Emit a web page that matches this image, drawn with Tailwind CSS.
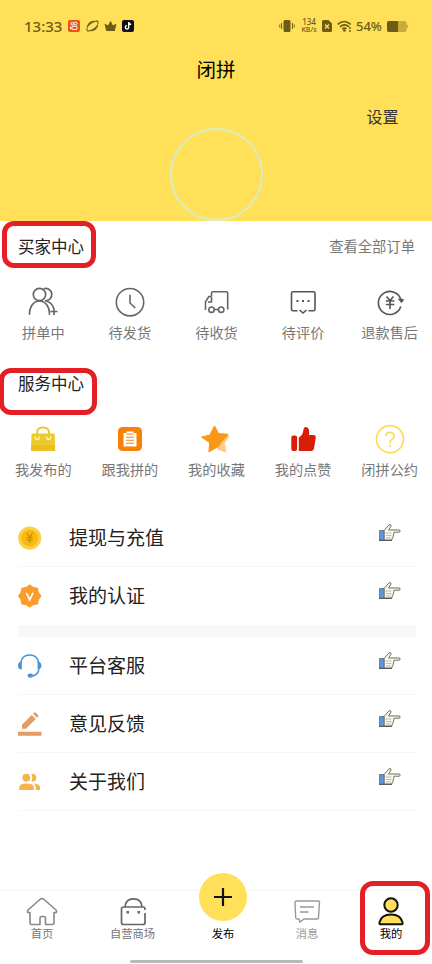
<!DOCTYPE html>
<html lang="zh-CN">
<head>
<meta charset="utf-8">
<title>我的</title>
<script src="https://cdn.jsdelivr.net/npm/@tailwindcss/browser@4"></script>
</head>
<body class="bg-white">
<svg width="0" height="0" class="absolute">
  <defs>
    <symbol id="hand" viewBox="0 0 24 20">
      <path d="M6 7.500 11 2q1.200-1 2 .1.400.7-.4 1.800L10.500 7H21q1.200 0 1.200 1T21 9.200h-5l-.4 2.600-.8 2.800-1.200 2.400H6z" fill="#fcfbee" stroke="#6d6c60" stroke-width="1"/>
      <path d="M7.500 10h6M8 12.500h5.500M8 14.800h5" stroke="#aaa99a" stroke-width=".8"/>
      <path d="M1.500 7.500h4.500v9.700H1.500z" fill="#6296d8" stroke="#52688a" stroke-width=".8"/>
      <path d="M1 17.400h13" stroke="#55554f" stroke-width="1"/>
    </symbol>
  </defs>
</svg>
<div class="relative w-[432px] h-[964px] overflow-hidden flex flex-col bg-white font-['Noto_Sans_CJK_SC',sans-serif] text-[#222]">

  <!-- Header -->
  <header class="h-[221px] shrink-0 bg-[#ffe058] flex flex-col">
    <div class="h-[52px] flex items-center pl-6 pr-[24px] text-[#6c5c14]">
      <span class="w-[44px] text-[15px] leading-[20px] font-medium font-['Noto_Sans',sans-serif] -mt-px">13:33</span>
      <svg class="w-3 h-3" viewBox="0 0 12 12"><rect width="12" height="12" rx="2" fill="#ea5514"/><g fill="none" stroke="#fff" stroke-width="1"><circle cx="4.300" cy="3.700" r="1.300"/><circle cx="7.500" cy="3.600" r="1.500"/><rect x="4" y="6.200" width="5" height="3.300" rx="1"/><path d="M2.500 6.500v2.500l1.500-1"/></g></svg>
      <svg class="w-[13px] h-3 ml-[5.500px]" viewBox="0 0 13 12"><path d="M.8 8.500C.5 3.800 4.500.2 9.500.8L12 1C7.500 1.800 3.500 4 .8 8.500zM12.200 3.500c.3 4.700-3.700 8.300-8.700 7.700L1 11c4.500-.8 8.500-3 11.200-7.500z" fill="currentColor"/><path d="M1 8v2.900l2 .1M12 4V1.100L10 1" fill="none" stroke="currentColor" stroke-width="1"/></svg>
      <svg class="w-[13px] h-3 ml-[5px]" viewBox="0 0 13 12"><path d="M.5 3.500 4 5.500 6.500.8 9 5.500l3.500-2L10.800 11H2.200z" fill="currentColor"/></svg>
      <svg class="w-3 h-3 ml-[5px]" viewBox="0 0 12 12"><rect width="12" height="12" rx="2" fill="#111018"/><path d="M6.700 2v5.300A1.700 1.700 0 1 1 5 5.600M6.700 2.200c.2 1.500 1.200 2.200 2.500 2.300" fill="none" stroke="#fff" stroke-width="1.400"/></svg>
      <span class="grow"></span>
      <svg class="w-4 h-3 mr-[4px]" viewBox="0 0 16 12"><rect x="4.500" y="0" width="7" height="12" rx="1.500" fill="currentColor"/><path d="M2.600 3v6M.8 4.500v3M13.400 3v6M15.200 4.500v3" stroke="currentColor" stroke-width="1"/></svg>
      <span class="w-[20px] mr-[3px] text-[8px] leading-[8px] font-medium font-['Noto_Sans',sans-serif] whitespace-nowrap flex flex-col items-center"><span>134</span><span class="text-[7px]">KB/s</span></span>
      <svg class="w-[10px] h-3 mr-[5px]" viewBox="0 0 10 12"><path d="M1.500 0h5L10 3.500v7a1.500 1.500 0 0 1-1.500 1.500h-7A1.500 1.500 0 0 1 0 10.500v-9A1.500 1.500 0 0 1 1.500 0z" fill="currentColor"/><path d="m3 4.500 4 4m0-4-4 4" stroke="#ffe058" stroke-width="1.300"/></svg>
      <svg class="w-[15px] h-3 mr-[4px]" viewBox="0 0 15 12"><path d="M.7 4.300q6.500-5.600 13 0M3 6.800q4.500-3.700 9 0M5.200 9q2.300-1.800 4.300 0" fill="none" stroke="currentColor" stroke-width="1.600"/><circle cx="7.400" cy="10.500" r="1.300" fill="currentColor"/><path d="M13 7v2m0 1v2" stroke="currentColor" stroke-width="1.400"/></svg>
      <span class="w-[27px] mr-[4px] text-[13px] leading-[16px] font-medium font-['Noto_Sans',sans-serif]">54%</span>
      <svg class="w-[21px] h-[11px]" viewBox="0 0 21 11"><path d="M2 0h16q1.500 0 1.500 2v1.500q1.500 0 1.500 2t-1.500 2V9q0 2-1.500 2H2Q0 11 0 9V2Q0 0 2 0z" fill="#c6aa3c"/><path d="M2 0h9v11H2Q0 11 0 9V2Q0 0 2 0z" fill="currentColor"/></svg>
    </div>
    <h1 class="h-[33px] flex items-center justify-center text-[19.500px] text-black">闭拼</h1>
    <div class="mt-[19px] h-[24px] flex items-center justify-end pr-[33.500px] text-[16px] text-[#333]">设置</div>
    <div class="self-center w-[93px] h-[93px] shrink-0 rounded-full border-[2.500px] border-[#d9ebc4]"></div>
  </header>

  <!-- Buyer centre -->
  <section class="h-[137px] shrink-0 flex flex-col">
    <div class="h-[50px] flex items-center justify-between pl-[18px] pr-[17px]">
      <h2 class="text-[16.500px]">买家中心</h2>
      <a class="text-[14.300px] text-[#777]">查看全部订单</a>
    </div>
    <div class="grid grid-cols-5 w-[433px] pt-[15px] text-[14.200px] leading-[20px] text-[#777] text-center">
      <div class="flex flex-col items-center gap-1">
        <svg class="w-8 h-8" viewBox="0 0 32 32" fill="none" stroke="#666" stroke-width="1.700"><circle cx="12.500" cy="8.500" r="6.200"/><path d="M16.500 2.700a6.200 6.200 0 1 1 1.500 12M2.500 28.800C2.500 20 7 15 12.500 15S22.500 20 22.500 28.800M19 15q6.500 2 7.500 7M23.500 25.500h7M27 22v7"/></svg>
        <span>拼单中</span></div>
      <div class="flex flex-col items-center gap-1">
        <svg class="w-8 h-8" viewBox="0 0 32 32" fill="none" stroke="#666" stroke-width="1.600"><circle cx="16" cy="16.200" r="13.700"/><path d="M16 8.700V17l5.200 5"/></svg>
        <span>待发货</span></div>
      <div class="flex flex-col items-center gap-1">
        <svg class="w-8 h-8" viewBox="0 0 32 32" fill="none" stroke="#666" stroke-width="1.600"><path d="M11.500 10V7q0-1.300 1.300-1.300h13.500q1.400 0 1.400 1.300v16.500M11.500 10.500H8.800L5.500 16v8M11.500 10.500V16H8M14.500 23.500h4"/><circle cx="11.500" cy="23.700" r="2.700"/><circle cx="21.200" cy="23.700" r="2.700"/></svg>
        <span>待收货</span></div>
      <div class="flex flex-col items-center gap-1">
        <svg class="w-8 h-8" viewBox="0 0 32 32" fill="none" stroke="#555" stroke-width="1.600"><path d="M10.500 24.700H6q-1.500 0-1.500-1.500V7.200q0-1.500 1.500-1.500h20.500q1.500 0 1.500 1.500v16q0 1.500-1.500 1.500h-5M12.500 24l3.500 3 3.500-3"/><path d="M9.500 15h2m3.500 0h2m3.500 0h2" stroke-width="2"/></svg>
        <span>待评价</span></div>
      <div class="flex flex-col items-center gap-1">
        <svg class="w-8 h-8" viewBox="0 0 32 32" fill="none" stroke="#555" stroke-width="1.600"><path d="M27 14A11.500 11.500 0 1 0 26.800 20.500M12.500 10.500l3.500 4 3.500-4M16 14.500V23M11.800 15h8.500M11.800 18.500h8.500"/><path d="m24.500 13 5.200.5-2.200 3.200z" fill="#555" stroke-width=".8"/></svg>
        <span>退款售后</span></div>
    </div>
  </section>

  <!-- Service centre -->
  <section class="h-[151px] shrink-0 flex flex-col">
    <div class="h-[50px] flex items-center pl-[18px]"><h2 class="text-[16.500px]">服务中心</h2></div>
    <div class="grid grid-cols-5 w-[433px] pt-[15px] text-[14.200px] leading-[20px] text-[#777] text-center">
      <div class="flex flex-col items-center gap-1">
        <svg class="w-8 h-8" viewBox="0 0 32 32"><path d="M4.500 10.500h23.200l.5 17.200H4z" fill="#edca2c"/><path d="M4.200 22h23.800v5.700H4z" fill="#f1bc20"/><path d="M10 11V9.500q0-5 6-5t6 5V11" fill="none" stroke="#edca2c" stroke-width="2"/><path d="M8 13.500q0 3 2.200 3t2.200-3M19.500 13.500q0 3 2.200 3t2.200-3" fill="none" stroke="#fff5c8" stroke-width="1.300"/></svg>
        <span>我发布的</span></div>
      <div class="flex flex-col items-center gap-1">
        <svg class="w-8 h-8" viewBox="0 0 32 32"><rect x="4" y="4" width="24" height="24" rx="4.500" fill="#f88105"/><path d="M9.500 10h3V8.500h7V10h3v13.500h-13z" fill="#fff"/><path d="M12.500 11h7M12 14.300h8M12 17.300h8M12 20.300h8" stroke="#f88105" stroke-width="1.100"/></svg>
        <span>跟我拼的</span></div>
      <div class="flex flex-col items-center gap-1">
        <svg class="w-8 h-8" viewBox="0 0 32 32"><path d="M20 11l9.800 1.500-5 7.500 1.500 9.500-9-3z" fill="#fbca86"/><path d="M14.500 3.200 18.300 10.500l9.400.8-6.200 7-3 5-9.500 5.500.8-9.300L1.800 14l8.200-2z" fill="#fb9616" stroke="#fb9616" stroke-width="1.200" stroke-linejoin="round"/></svg>
        <span>我的收藏</span></div>
      <div class="flex flex-col items-center gap-1">
        <svg class="w-8 h-8" viewBox="0 0 32 32" fill="#d81e06"><rect x="4.300" y="12.500" width="5.800" height="15.500" rx="2"/><path d="M11.800 14.500q4-2 4.500-7Q16.500 4 19 4q4 .5 3 8h4.500q2.500 0 2.300 2.500L27 25.500q-.5 2.500-3 2.500H11.800z"/></svg>
        <span>我的点赞</span></div>
      <div class="flex flex-col items-center gap-1">
        <svg class="w-8 h-8" viewBox="0 0 32 32" fill="none" stroke="#fbdc58" stroke-width="1.700"><circle cx="16" cy="16.200" r="13.500"/><path d="M11.700 13q.3-3.700 4.300-3.700t4.200 3.700q0 2-2.200 3.300-2 1.200-2 4.200M16 22v2"/></svg>
        <span>闭拼公约</span></div>
    </div>
  </section>

  <!-- Menu -->
  <ul class="ml-[18px] mr-[16px] shrink-0 text-[19px] text-[#222]">
    <li class="h-[58px] flex items-center border-b border-[#f7f7f7]">
      <svg class="w-6 h-6 mr-[27px]" viewBox="0 0 24 24"><circle cx="11.700" cy="12" r="11.600" fill="#fbd14c"/><circle cx="11.700" cy="12" r="8.600" fill="#fbb910"/><path d="m8.800 7.200 2.900 4 2.900-4M11.700 11v6M8.600 11.700h6.200M8.600 14.200h6.200" fill="none" stroke="#c88a16" stroke-width="1.200"/></svg>
      <span class="grow">提现与充值</span>
      <svg class="w-6 h-5 mr-[14px] -mt-[9px]"><use href="#hand"/></svg>
    </li>
    <li class="h-[58px] flex items-center pb-px">
      <svg class="w-6 h-6 mr-[27px]" viewBox="0 0 24 24"><path d="m11.700 1.200 3.100 2.300 4.500.9.800 4.300 2.500 3.300-2.500 3.500-.8 4.300-4.500.6-3.100 2.400-3.100-2.400-4.500-.6-.8-4.300L.8 12l2.500-3.300.8-4.300 4.500-.9z" fill="#fb9c2c" stroke="#fb9c2c" stroke-width="1.500" stroke-linejoin="round"/><path d="m8.400 8.800 3.300 7 3.300-7" fill="none" stroke="#fff" stroke-width="1.700"/></svg>
      <span class="grow">我的认证</span>
      <svg class="w-6 h-5 mr-[14px] -mt-[9px]"><use href="#hand"/></svg>
    </li>
    <li class="h-3 bg-[#f8f8f8]"></li>
    <li class="h-[58px] flex items-center border-b border-[#f7f7f7]">
      <svg class="w-6 h-6 mr-[27px]" viewBox="0 0 24 24" fill="none" stroke="#4b91d6" stroke-width="1.500"><path d="M2.700 9Q3.800.9 11.700.9T20.700 9M21 15.500q-1.500 6-7.500 6.500"/><path d="M3.800 7v8.500Q0 15.500 0 11.500 0 8 3.800 7zM19.600 7v8.500q3.800 0 3.800-4Q23.400 8 19.600 7z" fill="#4b91d6" stroke="none"/><ellipse cx="12.300" cy="21.600" rx="2.700" ry="2.100" fill="#4b91d6" stroke="none"/></svg>
      <span class="grow">平台客服</span>
      <svg class="w-6 h-5 mr-[14px] -mt-[9px]"><use href="#hand"/></svg>
    </li>
    <li class="h-[58px] flex items-center border-b border-[#f7f7f7]">
      <svg class="w-6 h-6 mr-[27px]" viewBox="0 0 24 24" fill="#e69b63"><path d="M0 19.800h23.500v4H0zM4 12.700 13.800 3l4 4L8 16.800H4zM15 1.800 16.200.6q.7-.6 1.400 0l2.600 2.600q.6.700 0 1.400L19 5.800z"/></svg>
      <span class="grow">意见反馈</span>
      <svg class="w-6 h-5 mr-[14px] -mt-[9px]"><use href="#hand"/></svg>
    </li>
    <li class="h-[58px] flex items-center border-b border-[#f7f7f7]">
      <svg class="w-6 h-6 mr-[27px]" viewBox="0 0 24 24" fill="#f6b34a"><circle cx="8.300" cy="7.700" r="3.900"/><path d="M1.200 20v-2.500q0-4 7.300-4t7.300 4V20zM13.200 3.900q5-.5 5 3.800t-5 3.800q2.200-3.800 0-7.600zM16 13.600q6 .6 6 4V20h-4.200v-2.500q0-2.500-1.800-3.900z"/></svg>
      <span class="grow">关于我们</span>
      <svg class="w-6 h-5 mr-[14px] -mt-[9px]"><use href="#hand"/></svg>
    </li>
  </ul>

  <!-- Tab bar -->
  <nav class="mt-auto h-[75px] shrink-0 border-t-2 border-[#f8f8f8] flex text-[11.300px] leading-[16px] text-[#777]">
    <div class="w-[84px] shrink-0 flex flex-col items-center pt-[4px]">
      <svg class="w-8 h-8" viewBox="0 0 32 32" fill="none" stroke="#888" stroke-width="1.600" stroke-linejoin="round"><path d="M4 17.500H1.800q-.8-1.500.2-2.500L14.500 4q1.500-1 3 0L30 15q1 1 .2 2.500H28V28q0 1.500-1.500 1.500h-7V23q0-1.500-1.500-1.500h-2.500q-1.500 0-1.500 1.500v6.500H5.500Q4 29.500 4 28z"/></svg>
      <span class="-mt-[2px]">首页</span></div>
    <div class="w-[97px] shrink-0 flex flex-col items-center pt-[4px]">
      <svg class="w-8 h-8" viewBox="0 0 32 32" fill="none" stroke="#666" stroke-width="1.700"><path d="M28 15v-1q0-2-2-2H6.500q-2 0-2 2v13.500q0 2 2 2H26q2 0 2-2V18M8 12q.5-8.200 8.500-8.200T25 12"/><path d="M9.500 17.200H12m8.500 0H23" stroke-width="2.500"/></svg>
      <span class="-mt-[2px]">自营商场</span></div>
    <div class="w-[84px] shrink-0 flex flex-col items-center text-black font-normal">
      <div class="-mt-[20px] w-[52px] h-[52px] shrink-0 rounded-full bg-white p-[2px]">
        <div class="w-12 h-12 rounded-full bg-[#ffe058] flex items-center justify-center"><svg class="w-[18px] h-[18px]" viewBox="0 0 18 18"><path d="M0 9h18M9 0v18" stroke="#111" stroke-width="2.200"/></svg></div>
      </div>
      <span class="mt-[2px]">发布</span></div>
    <div class="w-[84px] shrink-0 flex flex-col items-center pt-[4px]">
      <svg class="w-8 h-8" viewBox="0 0 32 32" fill="none" stroke="#999" stroke-width="1.400"><path d="M6 6h21.500q1 0 1 1L27.500 22.500q0 1.500-1.500 1.500H13L9 27l-1-3H6q-1.200 0-1.300-1.500L4 7.500Q4 6 6 6zM9 12h14M9 17h8.500"/></svg>
      <span class="-mt-[2px] text-[#999]">消息</span></div>
    <div class="w-[84px] shrink-0 flex flex-col items-center pt-[4px] text-black font-normal">
      <svg class="w-8 h-8" viewBox="0 0 32 32" fill="#ffe058" stroke="#111" stroke-width="2"><circle cx="16" cy="10" r="6.700"/><path d="M5 29.300q-.8 0-.5-2Q6.300 19.500 16 19.500t11.500 7.800q.3 2-.5 2z"/></svg>
      <span class="-mt-[2px]">我的</span></div>
  </nav>

  <!-- Gesture bar and highlight frames lie over the page -->
  <div class="absolute left-[130px] top-[960px] w-[173px] h-[3px] rounded-full bg-[#b9b9b9]"></div>
  <div class="absolute left-[2px] top-[221px] w-[94px] h-[47px] rounded-[12px] border-[5px] border-[#e41f26]"></div>
  <div class="absolute left-[-1px] top-[368px] w-[98px] h-[47px] rounded-[12px] border-[5px] border-[#e41f26]"></div>
  <div class="absolute left-[360px] top-[881px] w-[70px] h-[74px] rounded-[13px] border-[5px] border-[#e41f26]"></div>
</div>
</body>
</html>
